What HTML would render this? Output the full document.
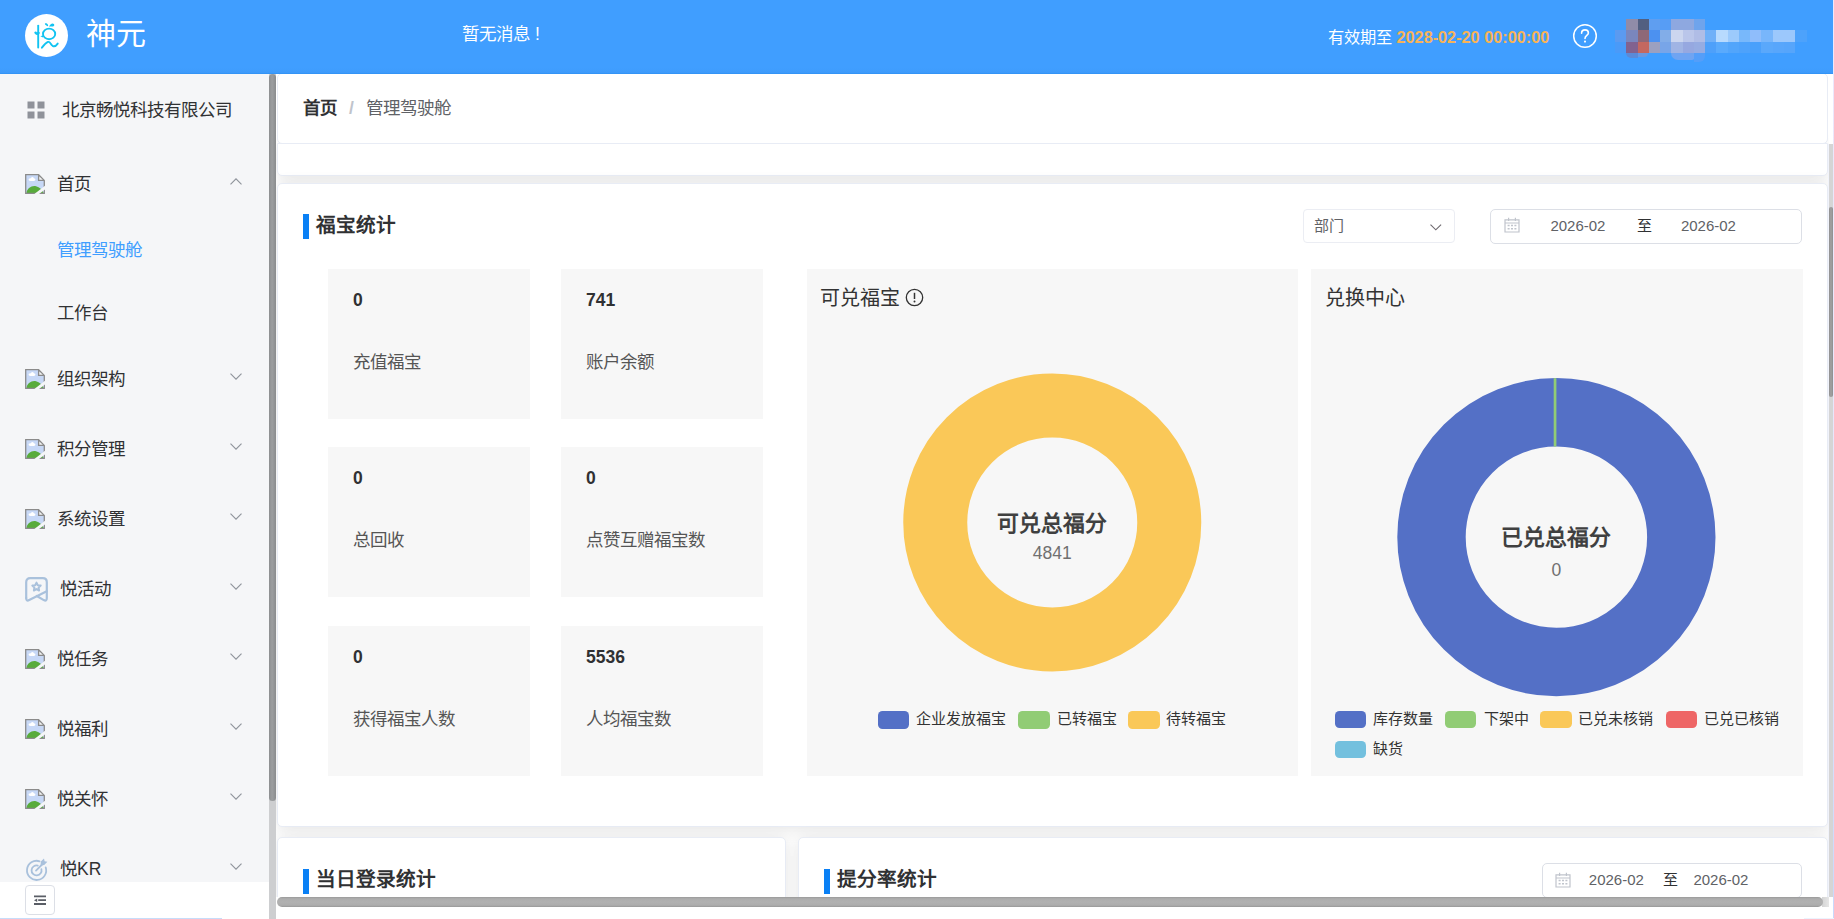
<!DOCTYPE html>
<html lang="zh-CN">
<head>
<meta charset="utf-8">
<title>神元 - 管理驾驶舱</title>
<style>
*{box-sizing:border-box;margin:0;padding:0}
html,body{width:1834px;height:919px;overflow:hidden;background:#fff}
body{position:relative;font-family:"Liberation Sans",sans-serif;color:#303133;font-size:17.5px}
.a{position:absolute}
.t{position:absolute;white-space:nowrap;line-height:1}
svg{position:absolute;display:block;overflow:visible}
/* header */
#hd{left:0;top:0;width:1833px;height:74px;background:#409eff}
#hdsh{left:0;top:68px;width:1833px;height:6px;background:linear-gradient(#409eff,#3e9bfb 70%,#3d9afa 83%,#3394f6 84%)}
#logo{left:25px;top:14px;width:43px;height:43px;border-radius:50%;background:#fff}
/* sidebar */
#sb{left:0;top:74px;width:269px;height:808px;background:#f5f6f8;overflow:hidden}
#sbft{left:0;top:882px;width:269px;height:37px;background:#fff}
#sbtrack{left:269px;top:74px;width:7px;height:845px;background:#cdced0}
#sbthumb{left:269px;top:74px;width:7px;height:727px;border-radius:4px;background:linear-gradient(90deg,#8d8f91,#9c9ea0 45%,#8a8c8e)}
.mi{font-size:17.5px;color:#303133}
.sub{font-size:17.5px}
/* main */
#main{left:276px;top:74px;width:1553px;height:823px;background:#fff;overflow:hidden}
.card{position:absolute;background:#fff;border:1px solid #e8ecf5;border-radius:5px;box-shadow:0 2.5px 15px 0 rgba(0,0,0,.1)}
.bar{position:absolute;width:6px;height:25px;background:#0a80f5}
.h{position:absolute;white-space:nowrap;line-height:1;font-size:19.6px;font-weight:bold;color:#303133}
.stat{position:absolute;width:202px;height:150px;background:#f7f7f7}
.stat b{position:absolute;left:25px;top:23px;font-size:17.5px;line-height:1;color:#303133}
.stat span{position:absolute;left:25px;top:85px;font-size:17.5px;line-height:1;color:#555;white-space:nowrap}
.panel{position:absolute;background:#f7f7f7}
.lg{position:absolute;width:31.4px;height:17.6px;border-radius:4.5px}
.lt{position:absolute;white-space:nowrap;line-height:1;font-size:15px;color:#333}
.inp{position:absolute;border:1px solid #dcdfe6;border-radius:5px;background:#fff}
.it{position:absolute;white-space:nowrap;line-height:1;font-size:15px;color:#606266}
</style>
</head>
<body>

<svg width="0" height="0" style="position:absolute;left:0;top:0">
<defs>
<symbol id="bi" viewBox="0 0 20 20">
<path d="M0.7 0.7H13.6L19.3 6.4V19.3H0.7Z" fill="#c7d8f6"/>
<ellipse cx="7" cy="5.6" rx="3.4" ry="1.5" fill="#fff"/><circle cx="7.4" cy="4.6" r="1.5" fill="#fff"/>
<path d="M1.3 19.3C2 14.5 6.5 11.2 11 12.2C14.5 13 17.5 16 18.8 19.3Z" fill="#58ab3c"/>
<path d="M13.6 0.7V6.4H19.3Z" fill="#f3f3f3"/>
<path d="M0.7 0.7H13.6L19.3 6.4V19.3H0.7Z M13.6 0.7V6.4H19.3" fill="none" stroke="#8b8b8b" stroke-width="1.3" stroke-linejoin="miter"/>
<path d="M8.6 20.6L20.6 11.2V15L13.2 20.6Z" fill="#f5f6f8"/>
</symbol>
<symbol id="ad" viewBox="0 0 12 7"><path d="M0.5 0.6L6 6.1L11.5 0.6" fill="none" stroke="#8f949c" stroke-width="1.15"/></symbol>
<symbol id="au" viewBox="0 0 12 7"><path d="M0.5 6.4L6 0.9L11.5 6.4" fill="none" stroke="#8f949c" stroke-width="1.15"/></symbol>
<symbol id="cal" viewBox="0 0 16 16">
<path d="M1 2.8H15V15H1Z M1 6H15" fill="none" stroke="#c0c4cc" stroke-width="1.2"/>
<path d="M4.6 0.8V4 M11.4 0.8V4" fill="none" stroke="#c0c4cc" stroke-width="1.2"/>
<path d="M3.6 8.6H5.6 M7 8.6H9 M10.4 8.6H12.4 M3.6 11.8H5.6 M7 11.8H9 M10.4 11.8H12.4" fill="none" stroke="#c0c4cc" stroke-width="1.5"/>
</symbol>
</defs>
</svg>
<!-- ================= HEADER ================= -->
<div id="hd" class="a"></div>
<div id="hdsh" class="a"></div>
<div class="a" style="left:1833px;top:0;width:1px;height:919px;background:linear-gradient(#ece8fc,#e6e6fc 60%,#c8d8fc)"></div>
<div id="logo" class="a"></div>
<svg width="43" height="43" viewBox="0 0 43 43" style="left:25px;top:14px">
<g fill="none" stroke="#12c3f1" stroke-width="1.9" stroke-linecap="round" stroke-linejoin="round">
<path d="M13.2 11.6V33.6"/>
<ellipse cx="24.1" cy="19.9" rx="6.1" ry="5.3"/>
<path d="M16.9 33.7C19 31 21.3 28.6 23 27.9C25.2 27.2 25.6 30.6 27.6 31.8C29.4 32.8 31.6 31.2 32.7 29.6"/>
</g>
<g fill="#12c3f1">
<path d="M9.3 18.2C10.2 17.2 11.5 17.6 12 18.4C12.6 17.6 14.2 17.5 14.8 18.4C15 19.6 13.4 20.9 12.1 21C10.8 20.8 9.2 19.6 9.3 18.2Z"/>
<path d="M20 9.5C20.8 9 22.2 9.6 22.8 10.6C23.2 11.4 23.2 12 22.9 12.2C22 11.9 20.6 11.2 20.1 10.4C19.9 10 19.8 9.7 20 9.5Z"/>
<path d="M24 12.7C24.6 11.2 25.6 9.6 27.2 9.4C28.6 9.3 29.5 10.2 29.3 11.2C29 12.3 27.8 12.7 26.6 12.5C25.6 12.4 24.8 12.5 24 12.7Z"/>
<path d="M15.4 22.3L18.3 21.2L18 23.6Z"/>
</g>
</svg>
<div class="t" style="left:86px;top:18.5px;font-size:30px;color:#fff">神元</div>
<div class="t" style="left:462px;top:26px;font-size:17.5px;color:#fff">暂无消息<span style="margin-left:4.9px">!</span></div>
<div class="t" style="left:1328px;top:29px;font-size:16.25px;color:#fff">有效期至 <b style="color:#f7b357">2028-02-20 00:00:00</b></div>
<svg width="26" height="26" viewBox="0 0 26 26" style="left:1572px;top:23.2px">
<circle cx="13" cy="13" r="11.3" fill="none" stroke="#fff" stroke-width="1.5"/>
<path d="M9.6 10.2C9.6 8.2 11.1 6.9 13 6.9C14.9 6.9 16.4 8.1 16.4 9.9C16.4 12.3 13 12.6 13 15.4" fill="none" stroke="#fff" stroke-width="1.6" stroke-linecap="round"/>
<circle cx="13" cy="18.6" r="1.05" fill="#fff"/>
</svg>
<div class="a" style="left:1615px;top:0;width:200px;height:74px">
<i style="position:absolute;left:11.25px;top:19px;width:11.5px;height:11.5px;background:#908ca8"></i>
<i style="position:absolute;left:22.5px;top:19px;width:11.5px;height:11.5px;background:#525f80"></i>
<i style="position:absolute;left:33.75px;top:19px;width:11.5px;height:11.5px;background:#5f9ef0"></i>
<i style="position:absolute;left:45.0px;top:19px;width:11.5px;height:11.5px;background:#579df5"></i>
<i style="position:absolute;left:56.25px;top:19px;width:11.5px;height:11.5px;background:#8ea8e0"></i>
<i style="position:absolute;left:67.5px;top:19px;width:11.5px;height:11.5px;background:#8ea8e0"></i>
<i style="position:absolute;left:78.75px;top:19px;width:11.5px;height:11.5px;background:#6fa4ec"></i>
<i style="position:absolute;left:0.0px;top:30.25px;width:11.5px;height:11.5px;background:#5b9af0"></i>
<i style="position:absolute;left:11.25px;top:30.25px;width:11.5px;height:11.5px;background:#7a86bd"></i>
<i style="position:absolute;left:22.5px;top:30.25px;width:11.5px;height:11.5px;background:#8e6878"></i>
<i style="position:absolute;left:33.75px;top:30.25px;width:11.5px;height:11.5px;background:#4c91f0"></i>
<i style="position:absolute;left:45.0px;top:30.25px;width:11.5px;height:11.5px;background:#82ade8"></i>
<i style="position:absolute;left:56.25px;top:30.25px;width:11.5px;height:11.5px;background:#ccd6ef"></i>
<i style="position:absolute;left:67.5px;top:30.25px;width:11.5px;height:11.5px;background:#bac6ea"></i>
<i style="position:absolute;left:78.75px;top:30.25px;width:11.5px;height:11.5px;background:#b0bde6"></i>
<i style="position:absolute;left:90.0px;top:30.25px;width:11.5px;height:11.5px;background:#70b0f8"></i>
<i style="position:absolute;left:101.25px;top:30.25px;width:11.5px;height:11.5px;background:#b8dafe"></i>
<i style="position:absolute;left:112.5px;top:30.25px;width:11.5px;height:11.5px;background:#9ccafc"></i>
<i style="position:absolute;left:123.75px;top:30.25px;width:11.5px;height:11.5px;background:#78b8fb"></i>
<i style="position:absolute;left:135.0px;top:30.25px;width:11.5px;height:11.5px;background:#8fbdfb"></i>
<i style="position:absolute;left:146.25px;top:30.25px;width:11.5px;height:11.5px;background:#78b6fb"></i>
<i style="position:absolute;left:157.5px;top:30.25px;width:11.5px;height:11.5px;background:#9cc8fc"></i>
<i style="position:absolute;left:168.75px;top:30.25px;width:11.5px;height:11.5px;background:#9cc8fc"></i>
<i style="position:absolute;left:180.0px;top:30.25px;width:11.5px;height:11.5px;background:#4da2fb"></i>
<i style="position:absolute;left:0.0px;top:41.5px;width:11.5px;height:11.5px;background:#4a9af8"></i>
<i style="position:absolute;left:11.25px;top:41.5px;width:11.5px;height:11.5px;background:#82628f"></i>
<i style="position:absolute;left:22.5px;top:41.5px;width:11.5px;height:11.5px;background:#c46860"></i>
<i style="position:absolute;left:33.75px;top:41.5px;width:11.5px;height:11.5px;background:#9ba0c0"></i>
<i style="position:absolute;left:45.0px;top:41.5px;width:11.5px;height:11.5px;background:#78a5e8"></i>
<i style="position:absolute;left:56.25px;top:41.5px;width:11.5px;height:11.5px;background:#a0b4e4"></i>
<i style="position:absolute;left:67.5px;top:41.5px;width:11.5px;height:11.5px;background:#96a8e0"></i>
<i style="position:absolute;left:78.75px;top:41.5px;width:11.5px;height:11.5px;background:#96ace2"></i>
<i style="position:absolute;left:90.0px;top:41.5px;width:11.5px;height:11.5px;background:#4ea0fa"></i>
<i style="position:absolute;left:101.25px;top:41.5px;width:11.5px;height:11.5px;background:#5aaafc"></i>
<i style="position:absolute;left:112.5px;top:41.5px;width:11.5px;height:11.5px;background:#52a5fb"></i>
<i style="position:absolute;left:123.75px;top:41.5px;width:11.5px;height:11.5px;background:#4ea2fb"></i>
<i style="position:absolute;left:135.0px;top:41.5px;width:11.5px;height:11.5px;background:#4aa0fb"></i>
<i style="position:absolute;left:146.25px;top:41.5px;width:11.5px;height:11.5px;background:#5aa8fb"></i>
<i style="position:absolute;left:157.5px;top:41.5px;width:11.5px;height:11.5px;background:#58a6fb"></i>
<i style="position:absolute;left:168.75px;top:41.5px;width:11.5px;height:11.5px;background:#56a5fb"></i>
<i style="position:absolute;left:11.25px;top:52.75px;width:11.25px;height:5px;background:#5a8ad8;border-radius:0 0 0 6px"></i>
<i style="position:absolute;left:22.5px;top:52.75px;width:10px;height:4px;background:#6a98e0;border-radius:0 0 8px 0"></i>
<i style="position:absolute;left:56.25px;top:52.75px;width:22.5px;height:7px;background:#6fa4f2;border-radius:0 0 4px 16px"></i>
<i style="position:absolute;left:78.75px;top:52.75px;width:11.25px;height:9px;background:#549ef9;border-radius:0 0 6px 0"></i>
</div>

<!-- ================= SIDEBAR ================= -->
<div id="sb" class="a">
<svg width="18" height="18" viewBox="0 0 18 18" style="left:26.5px;top:27px"><path d="M0.5 0.5h7v7h-7z M10.5 0.5h7v7h-7z M0.5 10.5h7v7h-7z M10.5 10.5h7v7h-7z" fill="#8f929a"/></svg>
<div class="t mi" style="left:62px;top:27.5px">北京畅悦科技有限公司</div>
<svg width="20" height="20" style="left:25px;top:100px"><use href="#bi"/></svg>
<div class="t mi" style="left:57px;top:101.75px">首页</div>
<svg width="12" height="7" style="left:229.5px;top:103.7px"><use href="#au"/></svg>
<svg width="20" height="20" style="left:25px;top:295px"><use href="#bi"/></svg>
<div class="t mi" style="left:57px;top:296.75px">组织架构</div>
<svg width="12" height="7" style="left:229.5px;top:298.9px"><use href="#ad"/></svg>
<svg width="20" height="20" style="left:25px;top:365px"><use href="#bi"/></svg>
<div class="t mi" style="left:57px;top:366.75px">积分管理</div>
<svg width="12" height="7" style="left:229.5px;top:368.9px"><use href="#ad"/></svg>
<svg width="20" height="20" style="left:25px;top:435px"><use href="#bi"/></svg>
<div class="t mi" style="left:57px;top:436.75px">系统设置</div>
<svg width="12" height="7" style="left:229.5px;top:438.9px"><use href="#ad"/></svg>
<svg width="23" height="25" viewBox="0 0 23 25" style="left:25px;top:503px">
<g fill="none" stroke="#a9c1dc" stroke-width="2.2" stroke-linecap="round" stroke-linejoin="round">
<path d="M1.2 21V5.2Q1.2 1.2 5.2 1.2H17.8Q21.8 1.2 21.8 5.2V21Q21.8 24.6 18.8 23.1L11.8 19"/>
<path d="M21.8 14.3L4.2 23.1Q1.2 24.6 1.2 21"/>
<path d="M11.5 5.6L12.8 8.2L15.7 8.6L13.6 10.6L14.1 13.5L11.5 12.1L8.9 13.5L9.4 10.6L7.3 8.6L10.2 8.2Z" stroke-width="2"/>
</g></svg>
<div class="t mi" style="left:60px;top:506.75px">悦活动</div>
<svg width="12" height="7" style="left:229.5px;top:508.9px"><use href="#ad"/></svg>
<svg width="20" height="20" style="left:25px;top:575px"><use href="#bi"/></svg>
<div class="t mi" style="left:57px;top:576.75px">悦任务</div>
<svg width="12" height="7" style="left:229.5px;top:578.9px"><use href="#ad"/></svg>
<svg width="20" height="20" style="left:25px;top:645px"><use href="#bi"/></svg>
<div class="t mi" style="left:57px;top:646.75px">悦福利</div>
<svg width="12" height="7" style="left:229.5px;top:648.9px"><use href="#ad"/></svg>
<svg width="20" height="20" style="left:25px;top:715px"><use href="#bi"/></svg>
<div class="t mi" style="left:57px;top:716.75px">悦关怀</div>
<svg width="12" height="7" style="left:229.5px;top:718.9px"><use href="#ad"/></svg>
<svg width="23" height="23" viewBox="0 0 23 23" style="left:25px;top:784px">
<g fill="none" stroke="#a9c1dc" stroke-width="1.8" stroke-linecap="round">
<path d="M14.6 3.3A9.6 9.6 0 1 0 20.7 9.4"/>
<path d="M12.8 7.6A5 5 0 1 0 16.4 11.2"/>
<path d="M11 12.6L17.6 6"/>
</g>
<path d="M15.6 7.6L15.8 3.6L19 0.4L19.6 3.2L22.4 3.8L19.2 7L15.6 7.6Z" fill="#a9c1dc"/>
</svg>
<div class="t mi" style="left:60px;top:786.75px">悦KR</div>
<svg width="12" height="7" style="left:229.5px;top:788.9px"><use href="#ad"/></svg>
<div class="t sub" style="left:57px;top:168px;color:#409eff">管理驾驶舱</div>
<div class="t sub" style="left:57px;top:230.5px;color:#303133">工作台</div>
</div>
<div id="sbft" class="a"></div>
<div id="sbtrack" class="a"></div>
<div id="sbthumb" class="a"></div>
<div class="a" style="left:25px;top:885px;width:30px;height:30px;border:1px solid #dcdfe6;border-radius:4px;background:#fff"></div>
<svg width="12" height="10" viewBox="0 0 12 10" style="left:34px;top:895px"><path d="M0 1.4H12 M4.2 5.2H12 M0 9H12" stroke="#5a5e66" stroke-width="1.8" fill="none"/><path d="M0 5.2L3.2 3.4V7Z" fill="#5a5e66"/></svg>
<div class="a" style="left:0;top:918px;width:222px;height:1px;background:#c6dcfa"></div>

<!-- ================= MAIN ================= -->
<div id="main" class="a">
<div class="card" style="left:1px;top:-1px;width:1551px;height:71px;z-index:2;box-shadow:none"></div>
<div class="card" style="left:1px;top:69px;width:1551px;height:32.5px;border-radius:0 0 5px 5px"></div>
<div class="card" style="left:1px;top:109px;width:1551px;height:644px"></div>
<div class="card" style="left:1px;top:763px;width:509px;height:200px"></div>
<div class="card" style="left:522px;top:763px;width:1030px;height:200px"></div>
<div class="t" style="left:27px;top:25.5px;font-size:17.5px;font-weight:bold;color:#303133;z-index:3">首页</div>
<div class="t" style="z-index:3;left:73px;top:26px;font-size:17.5px;font-weight:bold;color:#c0c4cc">/</div>
<div class="t" style="left:90px;top:25.5px;font-size:17.5px;color:#606266;z-index:3">管理驾驶舱</div>
<div class="bar" style="left:27px;top:140px"></div>
<div class="h" style="left:39.5px;top:141.5px">福宝统计</div>
<div class="bar" style="left:27px;top:795px"></div>
<div class="h" style="left:39.5px;top:795.5px">当日登录统计</div>
<div class="bar" style="left:548px;top:795px"></div>
<div class="h" style="left:561px;top:795.8px">提分率统计</div>
<div class="inp" style="left:1027px;top:135px;width:152px;height:34px;border-color:#ebedf3;border-radius:4px"></div>
<div class="it" style="left:1037.5px;top:144px">部门</div>
<svg width="12" height="7" viewBox="0 0 12 7" style="left:1154.3px;top:150.4px"><path d="M0.5 0.6L5.8 5.8L11.1 0.6" fill="none" stroke="#6f6a70" stroke-width="1.15"/></svg>
<div class="inp" style="left:1214px;top:135px;width:312px;height:35px"></div>
<svg width="16" height="16" style="left:1228px;top:143px"><use href="#cal"/></svg>
<div class="it" style="left:1274.4px;top:144.2px">2026-02</div>
<div class="it" style="left:1360.5px;top:144px;color:#303133">至</div>
<div class="it" style="left:1404.9px;top:144.2px">2026-02</div>
<div class="inp" style="left:1266px;top:789px;width:260px;height:35px"></div>
<svg width="16" height="16" style="left:1279px;top:798px"><use href="#cal"/></svg>
<div class="it" style="left:1312.8px;top:798.4px">2026-02</div>
<div class="it" style="left:1387.4px;top:797.9px;color:#303133">至</div>
<div class="it" style="left:1417.4px;top:798.4px">2026-02</div>
<div class="stat" style="left:52px;top:195px"><b>0</b><span>充值福宝</span></div>
<div class="stat" style="left:285px;top:195px"><b>741</b><span>账户余额</span></div>
<div class="stat" style="left:52px;top:373px"><b>0</b><span>总回收</span></div>
<div class="stat" style="left:285px;top:373px"><b>0</b><span>点赞互赠福宝数</span></div>
<div class="stat" style="left:52px;top:552px"><b>0</b><span>获得福宝人数</span></div>
<div class="stat" style="left:285px;top:552px"><b>5536</b><span>人均福宝数</span></div>
<div class="panel" style="left:531px;top:195px;width:490.5px;height:507px"></div>
<div class="panel" style="left:1035px;top:195px;width:492px;height:507px"></div>
<div class="t" style="left:543.5px;top:213.5px;font-size:20px;color:#333">可兑福宝</div>
<svg width="19" height="19" viewBox="0 0 19 19" style="left:629px;top:213.5px"><circle cx="9.5" cy="9.5" r="8.2" fill="none" stroke="#333" stroke-width="1.3"/><path d="M9.5 4.8V11" stroke="#333" stroke-width="1.5"/><circle cx="9.5" cy="13.6" r="1" fill="#333"/></svg>
<div class="t" style="left:1048.5px;top:213.5px;font-size:20px;color:#333">兑换中心</div>
<svg width="1553" height="823" viewBox="276 74 1553 823" style="left:0;top:0"><circle cx="1052.25" cy="522.5" r="117" fill="none" stroke="#fac858" stroke-width="64"/><circle cx="1556.4" cy="537.1" r="124.9" fill="none" stroke="#5470c6" stroke-width="68.4"/><path d="M1555.05 378.1V446.5" stroke="#91cc75" stroke-width="2.7"/></svg>
<div class="t" style="left:626.25px;width:300px;text-align:center;top:438.6px;font-size:21.8px;font-weight:bold;color:#404040">可兑总福分</div>
<div class="t" style="left:626.25px;width:300px;text-align:center;top:471px;font-size:17.5px;color:#707070">4841</div>
<div class="t" style="left:1130.4px;width:300px;text-align:center;top:453.2px;font-size:21.8px;font-weight:bold;color:#404040">已兑总福分</div>
<div class="t" style="left:1130.4px;width:300px;text-align:center;top:487.8px;font-size:17.5px;color:#707070">0</div>
<div class="lg" style="left:602px;top:637.2px;background:#5470c6"></div><div class="lt" style="left:640.2px;top:637.3px">企业发放福宝</div>
<div class="lg" style="left:742.4px;top:637.2px;background:#91cc75"></div><div class="lt" style="left:780.6px;top:637.3px">已转福宝</div>
<div class="lg" style="left:852.4px;top:637.2px;background:#fac858"></div><div class="lt" style="left:890.3px;top:637.3px">待转福宝</div>
<div class="lg" style="left:1058.9px;top:636.85px;background:#5470c6"></div><div class="lt" style="left:1096.5px;top:637px">库存数量</div>
<div class="lg" style="left:1168.9px;top:636.85px;background:#91cc75"></div><div class="lt" style="left:1207.5px;top:637px">下架中</div>
<div class="lg" style="left:1264.2px;top:636.85px;background:#fac858"></div><div class="lt" style="left:1302.4px;top:637px">已兑未核销</div>
<div class="lg" style="left:1389.6px;top:636.85px;background:#ee6666"></div><div class="lt" style="left:1428.1px;top:637px">已兑已核销</div>
<div class="lg" style="left:1058.9px;top:666.85px;background:#73c0de"></div><div class="lt" style="left:1096.5px;top:667px">缺货</div>
</div>

<div class="a" style="left:1828px;top:144px;width:1px;height:753px;background:#f1f3fb"></div>
<div class="a" style="left:1829px;top:144px;width:4px;height:753px;background:#d5d5d5"></div>
<div class="a" style="left:1829px;top:207px;width:4px;height:190px;border-radius:3px;background:linear-gradient(90deg,#909090,#a2a2a2 50%,#8e8e8e)"></div>
<div class="a" style="left:276px;top:897px;width:1557px;height:22px;background:#fff"></div>
<div class="a" style="left:1822px;top:897px;width:7px;height:10px;background:linear-gradient(90deg,#d4d4d4,#e6e6e6)"></div>
<div class="a" style="left:1804px;top:918px;width:30px;height:1px;background:#ecf3fe"></div>
<div class="a" style="left:277px;top:897px;width:1546px;height:10px;border-radius:5px;background:linear-gradient(#9a9a9a,#adadad 18%,#b1b1b1 50%,#adadad 82%,#989898)"></div>

</body>
</html>
